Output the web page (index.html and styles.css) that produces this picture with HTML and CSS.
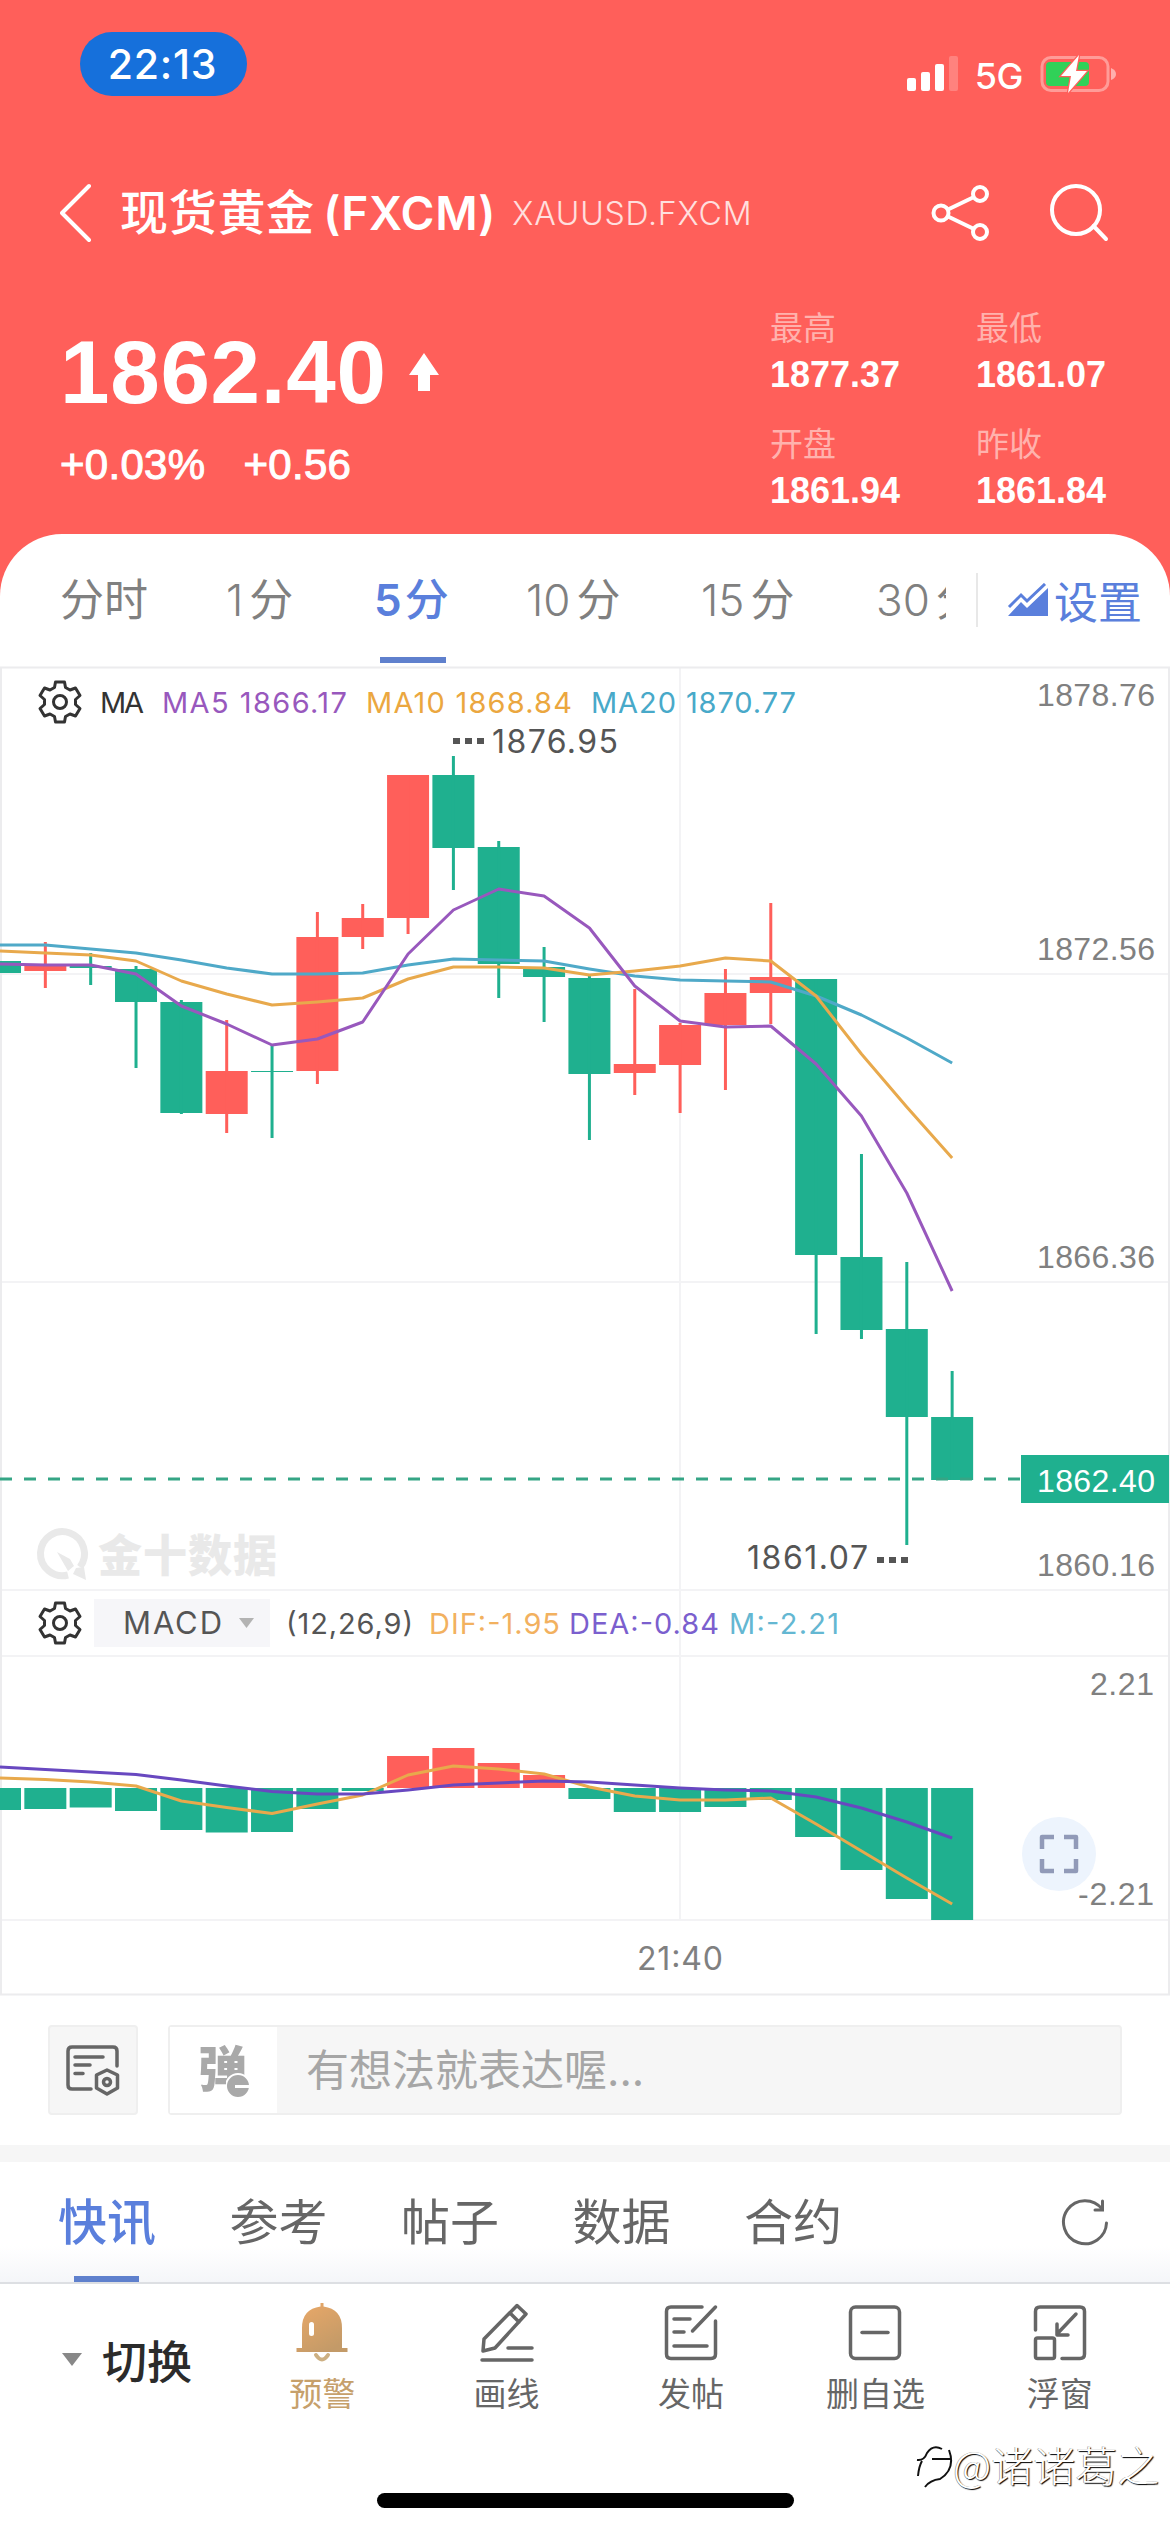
FILE: index.html
```html
<!DOCTYPE html>
<html lang="zh-CN">
<head>
    <meta charset="UTF-8">
    <title>现货黄金 (FXCM)</title>
    <link rel="stylesheet" href="styles.css">
</head>
<body>

<div class="header">
    <div class="status">
        <div class="clock">22:13</div>
        <div class="status-right">
            <svg width="52" height="36" viewBox="0 0 52 36" fill="#fff">
                <rect x="1" y="22" width="9" height="13" rx="2"/>
                <rect x="15" y="16" width="9" height="19" rx="2"/>
                <rect x="29" y="8" width="9" height="27" rx="2"/>
                <rect x="43" y="0" width="9" height="35" rx="2" opacity="0.22"/>
            </svg>
            <span class="net">5G</span>
            <svg width="78" height="40" viewBox="0 0 78 40">
                <rect x="3" y="3.5" width="66" height="33" rx="9" fill="none" stroke="#fff" stroke-opacity="0.38" stroke-width="3"/>
                <path d="M72 14 q5 2 5 6 q0 4 -5 6 z" fill="#fff" fill-opacity="0.5"/>
                <rect x="7" y="8" width="43" height="24" rx="4" fill="#30d158"/>
                <path d="M40 1 L22 22 H32 L29 39 L48 17 H37 Z" fill="#fff" stroke="#ff5f5a" stroke-width="2.5" paint-order="stroke"/>
            </svg>
        </div>
    </div>

    <div class="titlebar">
        <svg class="back" width="34" height="60" viewBox="0 0 34 60" fill="none" stroke="#fff" stroke-width="4" stroke-linecap="round" stroke-linejoin="round">
            <path d="M29 3 L2 30 L29 57"/>
        </svg>
        <h1>现货黄金 <span>(FXCM)</span></h1>
        <span class="code">XAUUSD.FXCM</span>
        <svg class="share" width="60" height="60" viewBox="0 0 60 60" fill="none" stroke="#fff" stroke-width="4">
            <circle cx="10" cy="30" r="7.5"/>
            <circle cx="49" cy="11" r="7"/>
            <circle cx="49" cy="49" r="7"/>
            <path d="M17 26.500 L43 14 M17 33.500 L43 46"/>
        </svg>
        <svg class="search" width="60" height="60" viewBox="0 0 60 60" fill="none" stroke="#fff" stroke-width="4" stroke-linecap="round">
            <circle cx="27" cy="27" r="24"/>
            <path d="M44.5 43 L57 56"/>
        </svg>
    </div>

    <div class="quote">
        <div class="quote-main">
            <div class="price">1862.40
                <svg width="30" height="38" viewBox="0 0 30 38" fill="#fff"><path d="M15 0 L30 22 H21 V38 H9 V22 H0 Z"/></svg>
            </div>
            <div class="change"><span>+0.03%</span><span>+0.56</span></div>
        </div>
        <div class="stats">
            <div class="stat"><span>最高</span><b>1877.37</b></div>
            <div class="stat"><span>最低</span><b>1861.07</b></div>
            <div class="stat"><span>开盘</span><b>1861.94</b></div>
            <div class="stat"><span>昨收</span><b>1861.84</b></div>
        </div>
    </div>
</div>

<div class="panel">
    <div class="periods">
        <div class="period-list">
            <span class="w2">分时</span>
            <span class="w1"><em>1</em>分</span>
            <span class="w1b active"><em>5</em>分</span>
            <span class="w3"><em>10</em>分</span>
            <span class="w3"><em>15</em>分</span>
            <span class="w3"><em>30</em>分</span>
        </div>
        <div class="settings">
            <svg width="42" height="34" viewBox="0 0 42 34" fill="#5a7fdc">
                <path d="M2 24 L14 12 L20 18 L38 1" fill="none" stroke="#5a7fdc" stroke-width="3"/>
                <path d="M1 33 L14 19 L20 25 L41 5 V33 Z"/>
            </svg>
            <span>设置</span>
        </div>
    </div>

    <svg class="chart" id="chart" width="1170" height="1330" viewBox="0 666 1170 1330">
        <defs>
            <g id="gear" fill="none" stroke="#333" stroke-width="3" stroke-linejoin="round">
                <path d="M-4.5 -20 H4.5 L5.5 -14.5 L10 -12 L15.5 -14 L20 -6.5 L15.5 -2.5 V2.5 L20 6.5 L15.5 14 L10 12 L5.5 14.5 L4.5 20 H-4.5 L-5.5 14.5 L-10 12 L-15.5 14 L-20 6.5 L-15.5 2.5 V-2.5 L-20 -6.5 L-15.5 -14 L-10 -12 L-5.5 -14.5 Z"/>
                <circle r="6.5"/>
            </g>
        </defs>
        <g class="grid">
            <path d="M0 974H1170 M0 1282H1170 M0 1590H1170 M0 1656H1170 M0 1920H1170 M680 668V1920"/>
            <path class="edge" d="M0 667.5H1170 M0 1994.5H1170 M1 667V1995 M1169 667V1995"/>
        </g>

        <!-- brand mark -->
        <g class="brand">
            <path d="M80 1567 A22 22 0 1 0 68 1575" fill="none" stroke="#e9e9e9" stroke-width="7"/>
            <path d="M57 1552 L70 1559 L74 1566 L68 1571 Z M76 1568 L84 1567 L86 1580 L73 1574 Z" fill="#e9e9e9"/>
            <text x="98" y="1572" textLength="179" fill="#e9e9e9">金十数据</text>
        </g>

        <g id="candles"></g>
        <g id="macd"></g>
        <g id="lines"></g>
        <path class="last-line" d="M0 1479H1021"/>

        <use href="#gear" x="60" y="702"/>
        <g class="legend">
            <text x="100" y="713" textLength="44" fill="#333">MA</text>
            <text x="162" y="713" textLength="185" fill="#9858bd">MA5 1866.17</text>
            <text x="366" y="713" textLength="206" fill="#eba73f">MA10 1868.84</text>
            <text x="591" y="713" textLength="205" fill="#48a9c9">MA20 1870.77</text>
        </g>

        <g class="mark">
            <rect x="453" y="738" width="7" height="6"/><rect x="465" y="738" width="7" height="6"/><rect x="477" y="738" width="7" height="6"/>
            <text x="492" y="753" textLength="126">1876.95</text>
            <text x="747" y="1569" textLength="121">1861.07</text>
            <rect x="877" y="1557" width="7" height="6"/><rect x="889" y="1557" width="7" height="6"/><rect x="901" y="1557" width="7" height="6"/>
        </g>

        <rect x="1021" y="1455" width="148" height="48" fill="#1fb08f"/>
        <circle cx="1059" cy="1854" r="37" fill="#edf4fd"/>
        <path d="M1042 1849V1837H1054 M1064 1837H1076V1849 M1076 1859V1871H1064 M1054 1871H1042V1859" fill="none" stroke="#919ab8" stroke-width="4.5" stroke-linejoin="round"/>
        <g class="axis">
            <text x="1155" y="706" textLength="118">1878.76</text>
            <text x="1155" y="960" textLength="118">1872.56</text>
            <text x="1155" y="1268" textLength="118">1866.36</text>
            <text x="1155" y="1492" textLength="118" class="last">1862.40</text>
            <text x="1155" y="1576" textLength="118">1860.16</text>
            <text x="1154" y="1695" textLength="64">2.21</text>
            <text x="1154" y="1905" textLength="76">-2.21</text>
        </g>
        <text class="time" x="680" y="1970" textLength="86">21:40</text>

        <use href="#gear" x="60" y="1623"/>
        <rect x="94" y="1599" width="176" height="48" fill="#f6f6f9"/>
        <path d="M239 1618H254L246.5 1628Z" fill="#b3b3b3"/>
        <g class="legend">
            <text x="123" y="1634" textLength="99" class="ind">MACD</text>
            <text x="286" y="1634" textLength="127" fill="#555">(12,26,9)</text>
            <text x="429" y="1634" textLength="131" fill="#f2b15f">DIF:-1.95</text>
            <text x="569" y="1634" textLength="150" fill="#7b5fce">DEA:-0.84</text>
            <text x="729" y="1634" textLength="110" fill="#64b7d2">M:-2.21</text>
        </g>
    </svg>

    <div class="comment">
        <div class="note">
            <svg width="54" height="52" viewBox="0 0 54 52" fill="none" stroke="#666" stroke-width="3.5" stroke-linecap="round" stroke-linejoin="round">
                <path d="M25 45 H6 Q2 45 2 41 V7 Q2 3 6 3 H47 Q51 3 51 7 V22"/>
                <path d="M9 13 H37 M9 21 H24 M9 29.5 H17"/>
                <path d="M41 26 L51.5 31 V44 L41 50 L30.5 44 V31 Z"/>
                <circle cx="41" cy="38" r="3.5"/>
            </svg>
        </div>
        <div class="input">
            <div class="danmu">弹
                <svg width="24" height="26" viewBox="0 0 24 26"><circle cx="12" cy="13" r="12" fill="#a9a9a9" stroke="#fff" stroke-width="2"/><path d="M9 13.5 H24" stroke="#fff" stroke-width="3"/></svg>
            </div>
            <div class="placeholder">有想法就表达喔...</div>
        </div>
    </div>

    <div class="feed">
        <span class="active">快讯</span>
        <span>参考</span>
        <span>帖子</span>
        <span>数据</span>
        <span>合约</span>
        <svg width="50" height="50" viewBox="0 0 50 50" fill="none" stroke="#666" stroke-width="3" stroke-linecap="round">
            <path d="M46.5 26 A21.5 21.5 0 1 1 42 12"/>
            <path d="M42.5 4 V13 H35"/>
        </svg>
    </div>
</div>

<div class="toolbar">
    <div class="switch"><i></i>切换</div>
    <div class="tool gold">
        <svg width="56" height="60" viewBox="0 0 56 60">
            <defs><linearGradient id="bell" x1="0" y1="0" x2="0.6" y2="1"><stop offset="0" stop-color="#eba968"/><stop offset="1" stop-color="#c39a68"/></linearGradient></defs>
            <path d="M26.5 1 H29.5 V4.5 Q48 7 48 26 V46 H53.5 V50 H2.5 V46 H8 V26 Q8 7 26.5 4.5 Z" fill="url(#bell)"/>
            <path d="M22 53 Q28 62 34 53" fill="none" stroke="#cdb083" stroke-width="4"/>
            <rect x="15" y="20" width="5" height="14" rx="2.5" fill="#fff"/>
        </svg>
        <span>预警</span>
    </div>
    <div class="tool">
        <svg width="56" height="60" viewBox="0 0 56 60">
            <path d="M38 3.5 L47 12 L16 46 L4 49 L5 37 Z M31 11 L40 20 M29 46 H53 M3 58 H53"/>
        </svg>
        <span>画线</span>
    </div>
    <div class="tool">
        <svg width="56" height="60" viewBox="0 0 56 60">
            <path d="M39 5 H8 Q3.5 5 3.5 9.5 V52 Q3.5 56.5 8 56.5 H48 Q52.5 56.5 52.5 52 V19 M52.5 5 L29.5 29 M11 17 H27 M11 30 H21 M11 44 H44"/>
        </svg>
        <span>发帖</span>
    </div>
    <div class="tool">
        <svg width="56" height="60" viewBox="0 0 56 60">
            <rect x="3.5" y="5" width="49" height="51.5" rx="5"/><path d="M15 30.5 H41"/>
        </svg>
        <span>删自选</span>
    </div>
    <div class="tool">
        <svg width="56" height="60" viewBox="0 0 56 60">
            <path d="M3.5 28 V9.500 Q3.5 5 8 5 H48 Q52.5 5 52.5 9.5 V52 Q52.5 56.5 48 56.5 H30 M44 12 L25 32 M25 22 V33 H36"/>
            <rect x="3.5" y="36" width="19" height="20.5" rx="2"/>
        </svg>
        <span>浮窗</span>
    </div>
</div>
<div class="home"></div>

<div class="author">
    <svg width="37" height="50" viewBox="0 0 37 50" fill="none" stroke="#111" stroke-width="2">
        <path d="M1 19 Q8 20 11 12 Q17 3 26 8 M2 35 Q3 25 6 20 M16 18 H34 M33 9 Q40 28 24 38 Q14 39 9 46"/>
    </svg>
    <span>@诸诸葛之</span>
</div>

<script src="script.js"></script>
</body>
</html>
```
FILE: styles.css
```css
* {
    box-sizing: border-box;
}

body {
    margin: 0;
    width: 1170px;
    height: 2532px;
    overflow: hidden;
    position: relative;
    display: flex;
    flex-direction: column;
    background: #fff;
    font-family: Inter, "Noto Sans CJK SC", sans-serif;
}

svg {
    display: block;
    flex: none;
}

.header {
    height: 600px;
    flex: none;
    background: #ff5f5a;
    color: #fff;
    padding: 32px 47px 0 60px;
}

.status {
    display: flex;
    justify-content: space-between;
    height: 64px;
    padding-left: 20px;
}

.clock {
    width: 167px;
    height: 64px;
    line-height: 64px;
    border-radius: 32px;
    background: #1670db;
    text-align: center;
    font-size: 41px;
    font-weight: 500;
    letter-spacing: 0.8px;
    padding-right: 2px;
}

.status-right {
    display: flex;
    align-items: center;
    height: 84px;
    margin-right: 6px;
}

.net {
    font-size: 36px;
    font-weight: 500;
    letter-spacing: -0.5px;
    margin: 3px 16px 0 17px;
    line-height: 40px;
}

.titlebar {
    display: flex;
    align-items: center;
    height: 60px;
    margin-top: 87px;
}

.titlebar h1 {
    margin: 0 0 0 26px;
    font-size: 48px;
    font-weight: 500;
    line-height: 60px;
    letter-spacing: 0.7px;
    white-space: nowrap;
}

.titlebar h1 span {
    font-size: 46px;
    font-weight: 600;
    margin-left: -5px;
}

.code {
    margin-left: 16px;
    font-size: 32px;
    font-weight: 300;
    letter-spacing: 0.8px;
    opacity: 0.8;
}

.share {
    margin-left: auto;
}

.search {
    margin: 0 14px 0 58px;
}

.quote {
    display: flex;
    justify-content: space-between;
    margin-top: 62px;
    font-family: "Liberation Sans", "Noto Sans CJK SC", sans-serif;
}

.price {
    display: flex;
    align-items: center;
    gap: 22px;
    height: 100px;
    margin-top: 17px;
    font-size: 89px;
    font-weight: bold;
    line-height: 100px;
    letter-spacing: 0.7px;
}

.change {
    display: flex;
    gap: 38px;
    margin-top: 13px;
    font-size: 42px;
    line-height: 60px;
    letter-spacing: 0.3px;
    -webkit-text-stroke: 1px #fff;
}

.stats {
    display: grid;
    grid-template-columns: 206px 147px;
    grid-auto-rows: 116px;
    padding-top: 1px;
}

.stat {
    display: flex;
    flex-direction: column;
}

.stat span {
    font-size: 33px;
    font-weight: 400;
    line-height: 46px;
    color: #ffb2ad;
}

.stat b {
    font-size: 36px;
    line-height: 46px;
}

.panel {
    margin-top: -66px;
    background: #fff;
    border-radius: 62px 62px 0 0;
    height: 1748px;
    flex: none;
    overflow: hidden;
}

.periods {
    display: flex;
    align-items: center;
    height: 132px;
    padding: 0 28px 0 60px;
}

.period-list {
    display: flex;
    width: 886px;
    height: 132px;
    overflow: hidden;
    white-space: nowrap;
    font-size: 44px;
    line-height: 132px;
    color: #808080;
}

.period-list em {
    font-style: normal;
    font-weight: 300;
    margin-right: 6px;
}

.period-list span {
    flex: none;
}

.period-list .w2 { width: 166px; }
.period-list .w1 { width: 148px; }
.period-list .w1b { width: 152px; }
.period-list .w3 { width: 175px; }

.period-list .active {
    color: #5a7fdc;
    font-weight: 500;
    background: linear-gradient(#5f80cd, #5f80cd) 6px 123px / 66px 6px no-repeat;
}

.period-list .active em {
    font-weight: 600;
    margin-right: 3px;
}

.settings {
    display: flex;
    align-items: center;
    gap: 5px;
    height: 54px;
    margin-left: 30px;
    padding-left: 29px;
    border-left: 2px solid #e8e8e8;
    font-size: 44px;
    color: #5a7fdc;
    white-space: nowrap;
}

.grid path {
    stroke: #f3f3f5;
    stroke-width: 2;
    fill: none;
}

.grid .edge {
    stroke: #ececee;
}

.brand text {
    font: 900 44px "Noto Sans CJK SC", sans-serif;
}

.up { fill: #ff5f5a; }
.down { fill: #1fb08f; }

#lines path {
    fill: none;
    stroke-width: 3;
    stroke-linejoin: round;
}

.last-line {
    fill: none;
    stroke: #35a585;
    stroke-width: 3;
    stroke-dasharray: 12 12;
}

.legend text {
    font-size: 29px;
}

.legend .ind {
    font-size: 31px;
    fill: #555;
}

.mark {
    fill: #555;
    font-size: 32px;
}

.axis text {
    font: 32px "Liberation Sans", sans-serif;
    text-anchor: end;
    fill: #808080;
}

.axis .last {
    fill: #fff;
}

.time {
    font-size: 32px;
    text-anchor: middle;
    fill: #808080;
}

.comment {
    display: flex;
    gap: 30px;
    height: 149px;
    padding: 29px 48px 0;
}

.note {
    display: flex;
    align-items: center;
    justify-content: center;
    width: 90px;
    height: 90px;
    background: #f6f6f6;
    border: 2px solid #efefef;
    border-radius: 4px;
}

.input {
    display: flex;
    flex: 1;
    height: 90px;
    background: #f6f6f6;
    border: 2px solid #efefef;
    border-radius: 4px;
    font-size: 43px;
    line-height: 86px;
}

.danmu {
    position: relative;
    width: 107px;
    padding-left: 28px;
    background: #fff;
    font-size: 49px;
    font-weight: 900;
    color: #a9a9a9;
}

.danmu svg {
    position: absolute;
    left: 56px;
    top: 46px;
}

.placeholder {
    padding-left: 29px;
    color: #a6a6a6;
}

.feed {
    display: flex;
    align-items: center;
    height: 137px;
    border-top: 17px solid #f6f6f6;
    padding: 0 60px 0 58px;
    background: linear-gradient(#fff 70%, #f5f6f9);
    font-size: 49px;
    color: #666;
}

.feed span {
    width: 171.5px;
    height: 120px;
    line-height: 122px;
}

.feed .active {
    color: #5a7fdc;
    font-weight: 500;
    background: linear-gradient(#5f80cd, #5f80cd) 16px 114px / 65px 6px no-repeat;
}

.feed svg {
    margin-left: auto;
}

.toolbar {
    display: flex;
    height: 180px;
    flex: none;
    padding: 18px 18px 0 62px;
    border-top: 2px solid #dddfe3;
    background: #fff;
}

.switch {
    display: flex;
    align-items: center;
    width: 168px;
    height: 115px;
    font-size: 45px;
    font-weight: 500;
    color: #2b2b2b;
    white-space: nowrap;
}

.switch i {
    border: 10px solid transparent;
    border-top: 13px solid #888;
    border-bottom: 0;
    margin-right: 20px;
}

.tool {
    width: 184.5px;
    display: flex;
    flex-direction: column;
    align-items: center;
    font-size: 33px;
    line-height: 44px;
    color: #666;
}

.tool svg {
    fill: none;
    stroke: #666;
    stroke-width: 3.5;
    stroke-linecap: round;
    stroke-linejoin: round;
}

.tool span {
    margin-top: 10px;
}

.gold {
    color: #c6a06b;
}

.gold svg {
    stroke: none;
}

.home {
    width: 417px;
    height: 15px;
    margin: 31px auto 0;
    border-radius: 8px;
    background: #000;
    flex: none;
}

/* signature laid over the bottom bar */
.author {
    position: absolute;
    left: 916px;
    top: 2441px;
    display: flex;
    font: 300 42px/46px "Noto Sans CJK SC", sans-serif;
    color: #fff;
    text-shadow: 1px 1px 1px #000, -0.5px -0.5px 0 #888;
    white-space: nowrap;
}
```
FILE: script.js
```js
const STEP = 45.34;
const WIDTH = 42;
const ZERO = 1788;

// direction, body top, body bottom, high, low
const candles = [
    ["down", 961, 973, 961, 973],
    ["up", 966, 971, 942, 988],
    ["down", 966, 968, 953, 985],
    ["down", 969, 1002, 966, 1068],
    ["down", 1002, 1113, 1000, 1114],
    ["up", 1071, 1114, 1020, 1133],
    ["down", 1071, 1072, 1045, 1138],
    ["up", 937, 1071, 912, 1084],
    ["up", 918, 937, 904, 949],
    ["up", 775, 918, 775, 934],
    ["down", 775, 848, 756, 890],
    ["down", 847, 964, 841, 998],
    ["down", 967, 977, 947, 1022],
    ["down", 978, 1074, 976, 1140],
    ["up", 1064, 1073, 989, 1095],
    ["up", 1025, 1065, 1023, 1113],
    ["up", 993, 1025, 969, 1090],
    ["up", 977, 993, 903, 1024],
    ["down", 979, 1255, 979, 1334],
    ["down", 1257, 1330, 1154, 1339],
    ["down", 1329, 1417, 1262, 1545],
    ["down", 1417, 1480, 1371, 1480]
];

const macd = [1810, 1809, 1807.5, 1811, 1830, 1832.5, 1832, 1809, 1791, 1756, 1748,
    1763, 1775, 1799, 1812, 1812, 1807, 1800, 1837, 1870, 1899, 1920];

const lines = [
    ["#4fa9c8", [945, 945, 949, 953, 960, 968, 974, 974, 973, 965, 959, 960, 961, 969, 976, 980, 981, 982, 996, 1015, 1038, 1063]],
    ["#e8a94c", [951, 953, 955, 961, 981, 994, 1005, 1002, 998, 979, 967, 967, 968, 975, 971, 966, 958, 961, 996, 1054, 1107, 1158]],
    ["#9858bd", [964, 965, 965, 974, 1006, 1024, 1045, 1039, 1022, 954, 910, 889, 896, 928, 986, 1021, 1027, 1026, 1064, 1116, 1193, 1291]],
    ["#e8a94c", [1778, 1779.5, 1782, 1786, 1801, 1807.5, 1813.5, 1804, 1795, 1775, 1766, 1769, 1774, 1787, 1796, 1800, 1800, 1798, 1824, 1851, 1878, 1904]],
    ["#6848c0", [1767, 1769.5, 1772, 1774.6, 1780, 1786, 1791.5, 1794, 1794, 1790, 1785, 1783, 1781, 1782, 1785, 1788, 1790, 1791, 1797, 1808, 1822, 1838]]
];

function rect(cls, x, y, w, h) {
    return `<rect class="${cls}" x="${x}" y="${y}" width="${w}" height="${h}"/>`;
}

let out = "";
candles.forEach(([cls, top, bottom, high, low], i) => {
    const x = i * STEP;
    out += rect(cls, x - WIDTH / 2, top, WIDTH, bottom - top);
    out += rect(cls, x - 1.5, high, 3, low - high);
});
document.getElementById("candles").innerHTML = out;

document.getElementById("macd").innerHTML = macd.map((y, i) =>
    rect(y < ZERO ? "up" : "down", i * STEP - WIDTH / 2, Math.min(y, ZERO), WIDTH, Math.abs(y - ZERO))
).join("");

document.getElementById("lines").innerHTML = lines.map(([color, ys]) =>
    `<path stroke="${color}" d="M${ys.map((y, i) => `${i * STEP} ${y}`).join("L")}"/>`
).join("");
```
